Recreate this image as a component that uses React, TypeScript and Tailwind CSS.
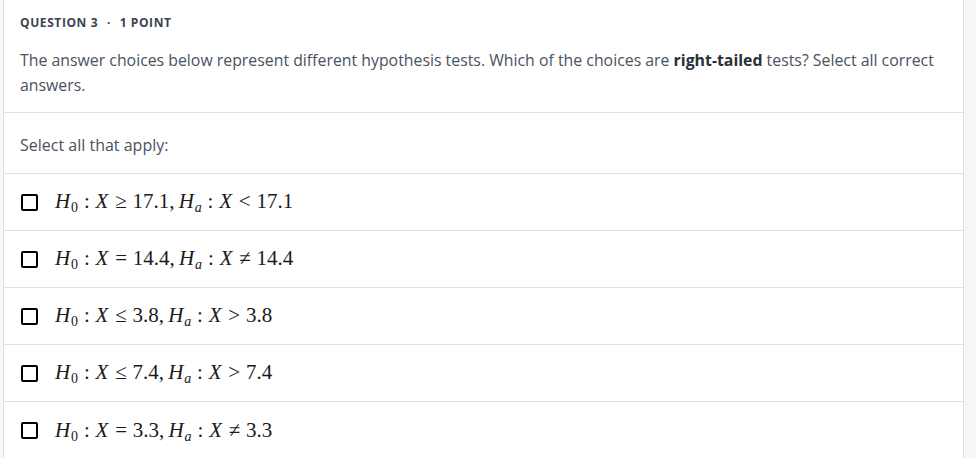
import React from "react";

type Choice = { rel0: string; v0: string; relA: string; vA: string };

const choices: Choice[] = [
  { rel0: "≥", v0: "17.1", relA: "<", vA: "17.1" },
  { rel0: "=", v0: "14.4", relA: "≠", vA: "14.4" },
  { rel0: "≤", v0: "3.8", relA: ">", vA: "3.8" },
  { rel0: "≤", v0: "7.4", relA: ">", vA: "7.4" },
  { rel0: "=", v0: "3.3", relA: "≠", vA: "3.3" },
];

function Rel({ children }: { children: React.ReactNode }) {
  return <span className="mx-[0.28em]">{children}</span>;
}

function Hyp({ c }: { c: Choice }) {
  return (
    <span className="font-['Liberation_Serif','DejaVu_Serif',serif] text-[21px] leading-none text-[#1a1a1a] whitespace-nowrap">
      <i className="mr-[0.04em]">H</i>
      <span className="relative top-[4px] text-[14px]">0</span>
      <Rel>:</Rel>
      <i className="mr-[0.04em]">X</i>
      <Rel>{c.rel0}</Rel>
      {c.v0}
      <span className="mr-[0.2em]">,</span>
      <i className="mr-[0.04em]">H</i>
      <i className="relative top-[4px] text-[14px]">a</i>
      <Rel>:</Rel>
      <i className="mr-[0.04em]">X</i>
      <Rel>{c.relA}</Rel>
      {c.vA}
    </span>
  );
}

export default function App() {
  return (
    <div className="h-[458px] bg-[#f7f7f7] font-['Open_Sans',sans-serif] overflow-hidden">
      <div className="ml-[3px] w-[961px] h-full bg-white border-x border-[#e0e0e0]">
        <div className="px-[16px] pt-[14px] pb-[14px] border-b border-[#e0e0e0]">
          <div className="text-[12px] leading-[18px] font-bold tracking-[0.05em] text-[#3b4350]">
            QUESTION 3 <span className="mx-[5px]">·</span> 1 POINT
          </div>
          <p className="mt-[16px] text-[15.85px] leading-[25px] text-[#4a5260]">
            The answer choices below represent different hypothesis tests. Which of the choices are{" "}
            <b className="font-bold text-[#2b2f36]">right-tailed</b> tests? Select all correct answers.
          </p>
        </div>
        <div className="px-[16px] pt-[20px] pb-[15px] border-b border-[#e0e0e0] text-[16px] leading-[25px] text-[#4a5260]">
          Select all that apply:
        </div>
        {choices.map((c, i) => (
          <label
            key={i}
            className="flex items-center h-[57px] px-[17px] border-b border-[#e0e0e0] last:border-b-0"
          >
            <span className="w-[17px] h-[17px] border-2 border-black rounded-[2px] shrink-0" />
            <span className="ml-[17px]">
              <Hyp c={c} />
            </span>
          </label>
        ))}
      </div>
    </div>
  );
}
